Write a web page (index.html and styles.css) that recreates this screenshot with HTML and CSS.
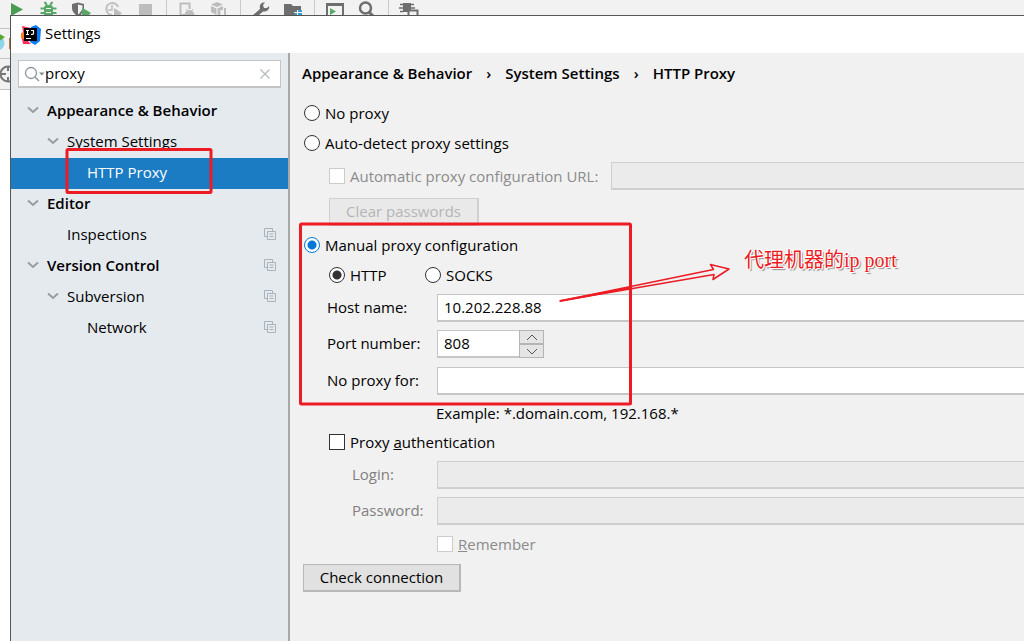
FILE: index.html
```html
<!DOCTYPE html>
<html lang="en">
<head>
<meta charset="utf-8">
<title>Settings</title>
<link rel="stylesheet" href="styles.css">
</head>
<body>
<div class="screen">
  <header class="toolbar">
    <svg class="tool" viewBox="0 0 20 15"><path d="M4 3L16 9.500L4 16z" fill="#499c54"/></svg>
    <svg class="tool" viewBox="0 0 20 15"><g fill="#59a869"><rect x="5" y="5" width="9" height="12" rx="3"/><path d="M1.500 7.500h16v2h-16zM1.500 12h16v2h-16z"/></g><path d="M5.500 2l2.500 3M13.500 2L11 5" stroke="#59a869" stroke-width="2"/><path d="M7 8.500h5M7 12.500h5" stroke="#f2f2f2"/></svg>
    <svg class="tool" viewBox="0 0 20 15"><path d="M1 4l6-1.500L13 4v4l-3 7H5C2 13 1 10 1 8z" fill="#6e6e6e"/><path d="M7 4.500L11.500 5.500V9L8 14H7z" fill="#f2f2f2"/><path d="M11 7.500L20 13l-3 3h-6z" fill="#59a869"/></svg>
    <svg class="tool" viewBox="0 0 20 15"><path d="M9 15A6 6 0 1 1 15 7" fill="none" stroke="#bdbdbd" stroke-width="2"/><path d="M9 5v5H5" fill="none" stroke="#bdbdbd" stroke-width="1.500"/><path d="M11 8l8 5-3 3h-5z" fill="#bdbdbd"/></svg>
    <svg class="tool" viewBox="0 0 20 15"><path d="M4 4h13v11H4z" fill="#bdbdbd"/></svg>
    <span class="tool-sep"></span>
    <svg class="tool" viewBox="0 0 20 15"><path d="M9 15H3.500V3.500h9V9" fill="none" stroke="#bdbdbd" stroke-width="2"/><path d="M8 15a4.500 4.500 0 0 1 9 0zM9 9l2 3M16 9l-2 3" fill="#bdbdbd" stroke="#bdbdbd"/></svg>
    <svg class="tool" viewBox="0 0 20 15"><path d="M8 2l6 2.500-6 2.500-6-2.500zM2 6l5.500 2.500V15L2 12zM14 6L8.500 8.500V15h3V10h2.500z" fill="#bdbdbd"/><path d="M16 8v7" stroke="#bdbdbd" stroke-width="2"/></svg>
    <span class="tool-sep"></span>
    <svg class="tool" viewBox="0 0 20 15"><path d="M2 15L9 9C8 5 10 2 14 2.500L12 5l1 3 3 0 2-2c1 4-3 6-6 5.500L8 15z" fill="#6e6e6e"/></svg>
    <svg class="tool" viewBox="0 0 20 15"><path d="M1 4h7l2 2h8v4h-4v5H1z" fill="#6e6e6e"/><path d="M14 10h5v5h-7v-3h2z" fill="#389fd6"/><path d="M14.500 10v5M11 12.500h8" stroke="#f2f2f2"/></svg>
    <span class="tool-sep"></span>
    <svg class="tool" viewBox="0 0 20 15"><path d="M2 16V4h16v12" fill="none" stroke="#6e6e6e" stroke-width="2"/><path d="M1 3h18v3H1z" fill="#6e6e6e"/><path d="M5 8l6 3.500L5 15z" fill="#59a869"/></svg>
    <svg class="tool" viewBox="0 0 20 15"><circle cx="8.500" cy="8" r="5.500" fill="none" stroke="#6e6e6e" stroke-width="2.500"/><path d="M12 12l4 4" stroke="#6e6e6e" stroke-width="3"/></svg>
    <span class="tool-sep"></span>
    <svg class="tool" viewBox="0 0 20 15"><path d="M4 3h8v9H4z" fill="#6e6e6e"/><path d="M1 4.500h3M-1 8h5M12 4.500h3M12 8h4M1 11.500h3" stroke="#6e6e6e" stroke-width="1.500"/><path d="M9.500 10.500h9V16h-9z" fill="#f2f2f2" stroke="#6e6e6e" stroke-width="2"/></svg>
  </header>

  <div class="workspace">
    <aside class="gutter">
      <svg class="gutter-art" viewBox="0 0 10 75">
        <path d="M0 13.500h10M0 43.500h10M0 74.500h10" stroke="#c4c4c4"/>
        <circle cx="-3" cy="28" r="7.500" fill="#8fd3ec"/>
        <path d="M-2 18l7 4-7 5z" fill="#59a82e"/>
        <path d="M9.500 23v11" stroke="#b47a45"/>
        <circle cx="8" cy="59" r="7.500" fill="none" stroke="#777" stroke-width="2"/>
        <path d="M1 59h5M8 51v5M8 62v5" stroke="#777" stroke-width="2"/>
      </svg>
    </aside>

    <section class="dialog">
      <div class="titlebar">
        <svg class="logo" viewBox="0 0 20 20">
          <path d="M1 1l9 2-5 14-4-2-1-5 2-3z" fill="#fe315d"/>
          <path d="M0 8l6-1 1 9-7-3z" fill="#fc801d"/>
          <path d="M10 2l5-2 5 4-1 12-5 4-5-3z" fill="#087cfa"/>
          <path d="M1 14l5 1 4 4-8 0z" fill="#fe315d"/>
          <path d="M3 3h13v13H3z" fill="#000"/>
          <path d="M5 5.500h3M6.500 5.500v4M5 9.500h3M10 5.500h3M12.500 5.500v3q0 1-2.500 1M5 13.500h5" fill="none" stroke="#fff" stroke-width="1.200"/>
        </svg>
        <span class="title">Settings</span>
      </div>

      <div class="dialog-body">
        <nav class="sidebar">
          <label class="search">
            <svg class="search-icon" viewBox="0 0 21 18"><circle cx="7" cy="8" r="5.500" fill="none" stroke="#8a949c" stroke-width="1.300"/><path d="M11 12l4 4" stroke="#8a949c" stroke-width="1.500"/><path d="M15 7.500h5.500l-2.700 3z" fill="#7f8b91"/></svg>
            <input class="search-input" type="text" value="proxy" aria-label="Search settings">
            <button class="clear" type="button" aria-label="Clear search"><svg viewBox="0 0 10 10"><path d="M.5.500l9 9M9.500.500l-9 9" stroke="#b5babd" stroke-width="1.300"/></svg></button>
          </label>
          <ul class="tree">
            <li class="node level-1"><svg class="chevron" viewBox="0 0 12 8"><path d="M1 1.500l5 4.500 5-4.500" /></svg><span class="node-text">Appearance &amp; Behavior</span></li>
            <li class="node level-2"><svg class="chevron" viewBox="0 0 12 8"><path d="M1 1.500l5 4.500 5-4.500" /></svg><span class="node-text">System Settings</span></li>
            <li class="node level-3 selected"><span class="node-text">HTTP Proxy</span></li>
            <li class="node level-1"><svg class="chevron" viewBox="0 0 12 8"><path d="M1 1.500l5 4.500 5-4.500" /></svg><span class="node-text">Editor</span></li>
            <li class="node level-2 leaf"><span class="node-text">Inspections</span><svg class="scope" viewBox="0 0 12 12"><path d="M3 8.500H.5v-8h8V3M3.500 3.500h8v8h-8zM5.500 6h4M5.500 8.500h4"/></svg></li>
            <li class="node level-1"><svg class="chevron" viewBox="0 0 12 8"><path d="M1 1.500l5 4.500 5-4.500" /></svg><span class="node-text">Version Control</span><svg class="scope" viewBox="0 0 12 12"><path d="M3 8.500H.5v-8h8V3M3.500 3.500h8v8h-8zM5.500 6h4M5.500 8.500h4"/></svg></li>
            <li class="node level-2"><svg class="chevron" viewBox="0 0 12 8"><path d="M1 1.500l5 4.500 5-4.500" /></svg><span class="node-text">Subversion</span><svg class="scope" viewBox="0 0 12 12"><path d="M3 8.500H.5v-8h8V3M3.500 3.500h8v8h-8zM5.500 6h4M5.500 8.500h4"/></svg></li>
            <li class="node level-3"><span class="node-text">Network</span><svg class="scope" viewBox="0 0 12 12"><path d="M3 8.500H.5v-8h8V3M3.500 3.500h8v8h-8zM5.500 6h4M5.500 8.500h4"/></svg></li>
          </ul>
        </nav>

        <main class="content">
          <div class="breadcrumb"><span>Appearance &amp; Behavior</span><span class="crumb-sep">›</span><span>System Settings</span><span class="crumb-sep">›</span><span>HTTP Proxy</span></div>

          <form class="form">
            <div class="row outer"><label class="option"><input type="radio" name="mode">No proxy</label></div>
            <div class="row outer"><label class="option"><input type="radio" name="mode">Auto-detect proxy settings</label></div>
            <div class="row tall indent gap"><label class="option disabled"><input type="checkbox" disabled>Automatic proxy configuration URL:</label><input class="field" type="text" aria-label="Automatic proxy configuration URL" disabled></div>
            <div class="row tall indent"><button class="button wide" type="button" disabled>Clear passwords</button></div>
            <div class="row outer"><label class="option"><input class="accent" type="radio" name="mode" checked>Manual proxy configuration</label></div>
            <div class="row indent protocols"><label class="option"><input type="radio" name="protocol" checked>HTTP</label><label class="option"><input type="radio" name="protocol">SOCKS</label></div>
            <div class="row tall"><label class="name" for="host">Host name:</label><input class="field" id="host" type="text" value="10.202.228.88"></div>
            <div class="row tall"><label class="name" for="port">Port number:</label><div class="spinner"><input class="field" id="port" type="text" value="808"><div class="steps"><button type="button" aria-label="Increase"><svg viewBox="0 0 12 7"><path d="M1 6l5-5 5 5"/></svg></button><button type="button" aria-label="Decrease"><svg viewBox="0 0 12 7"><path d="M1 1l5 5 5-5"/></svg></button></div></div></div>
            <div class="row exceptions"><label class="name" for="except">No proxy for:</label><input class="field" id="except" type="text"></div>
            <div class="row hint">Example: *.domain.com, 192.168.*</div>
            <div class="row indent"><label class="option"><input type="checkbox"><span>Proxy <u>a</u>uthentication</span></label></div>
            <div class="row tall"><label class="name nested" for="login">Login:</label><input class="field" id="login" type="text" disabled></div>
            <div class="row tall"><label class="name nested" for="password">Password:</label><input class="field" id="password" type="password" disabled></div>
            <div class="row remember"><label class="option disabled"><input type="checkbox" disabled><span><u>R</u>emember</span></label></div>
            <div class="row tall"><button class="button check" type="button">Check connection</button></div>
          </form>
        </main>
      </div>
    </section>
  </div>

  <svg class="marks" width="1024" height="641" viewBox="0 0 1024 641">
    <g fill="none" stroke="#ed1c24">
      <rect x="67" y="149.500" width="144" height="43" stroke-width="3" rx="1"/>
      <rect x="300.500" y="224" width="330" height="180" stroke-width="3" rx="1"/>
      <path d="M560 301L713.500 269.500 710.500 264.500 729 269 713 279.500 714 274.500z" stroke-width="1.500" stroke-linejoin="round"/>
      <path d="M560 301L632 287.500" stroke-width="2"/>
    </g>
  </svg>
  <div class="note">代理机器的ip port</div>
</div>
</body>
</html>
```
FILE: styles.css
```css
* { box-sizing: border-box; }

body {
  margin: 0;
  font: 15px/20px "Open Sans", "Noto Sans", sans-serif;
  color: #000;
}

input, button { font: inherit; color: inherit; margin: 0; }

.screen {
  position: relative;
  display: flex;
  flex-direction: column;
  height: 100vh;
  overflow: hidden;
  background: #f2f2f2;
}

/* Main window behind the dialog */
.toolbar { display: flex; flex: none; padding-left: 1px; }
.tool { width: 20px; height: 15px; margin: 0 6px; }
.tool-sep { width: 1px; margin: 0 4px 0 5px; background: #c9c9c9; }
.workspace { display: flex; flex: 1; min-height: 0; }
.gutter { flex: none; width: 10px; background: #fff; }
.gutter-art { display: block; width: 10px; height: 75px; background: #f2f2f2; }

/* Dialog */
.dialog {
  flex: 1;
  min-width: 0;
  display: flex;
  flex-direction: column;
  border: solid #555;
  border-width: 1px 0 0 1px;
  background: #f1f1f1;
}
.titlebar {
  display: flex;
  flex: none;
  align-items: center;
  gap: 4px;
  height: 37px;
  padding-left: 10px;
  background: #fff;
}
.title { padding-bottom: 4px; }
.logo { width: 20px; height: 20px; }
.dialog-body { display: flex; flex: 1; min-height: 0; }

/* Sidebar */
.sidebar {
  flex: none;
  width: 279px;
  border-right: 2px solid #a8a8a8;
  background: #e5eaef;
}
.search {
  display: flex;
  align-items: center;
  height: 28px;
  margin: 7px 7px 8px;
  padding: 0 10px 0 5px;
  border: 2px solid #c4c4c4;
  border-width: 1px 1px 2px;
  background: #fff;
}
.search-icon { flex: none; width: 21px; height: 18px; }
.search-input { flex: 1; min-width: 0; padding: 0 0 2px; border: 0; outline: 0; background: none; }
.clear { display: flex; padding: 0; border: 0; background: none; }
.clear svg { width: 10px; height: 10px; }

.tree { margin: 0; padding: 0; list-style: none; }
.node { display: flex; align-items: center; height: 31px; padding-right: 12px; padding-bottom: 3px; }
.node-text { flex: 1; }
.level-1 { padding-left: 16px; font-weight: 600; }
.level-2 { padding-left: 36px; }
.level-3 { padding-left: 76px; }
.leaf { padding-left: 56px; }
.selected { background: #1b7cc4; color: #fff; }
.chevron { width: 12px; height: 8px; margin-right: 8px; fill: none; stroke: #999c9f; stroke-width: 2; }
.scope { width: 12px; height: 12px; fill: none; stroke: #a9b3bb; }

/* Content */
.content { flex: 1; min-width: 0; padding-left: 12px; }
.breadcrumb {
  display: flex;
  align-items: center;
  height: 41px;
  margin-bottom: 4px;
  padding-bottom: 2px;
  font-weight: 600;
  white-space: nowrap;
}
.crumb-sep { width: 33px; text-align: center; }

.row { display: flex; align-items: center; height: 30px; white-space: nowrap; }
.outer { padding-left: 2px; }
.tall { height: 36px; }
.indent { padding-left: 27px; }
.gap { gap: 13px; }
.option { display: flex; align-items: center; gap: 5px; padding-bottom: 1px; }
.disabled { color: #8b8b8b; }
.protocols .option { width: 96px; }
.exceptions { height: 38px; }
.hint { height: 27px; padding: 0 0 1px 134px; }
.remember { height: 31px; padding-left: 135px; }
.name { flex: none; width: 135px; padding: 0 0 2px 25px; }
.name.nested { padding-left: 50px; color: #808080; }

input[type="radio"], input[type="checkbox"] {
  appearance: none;
  flex: none;
  width: 16px;
  height: 16px;
  border: 1px solid #333;
  background: #fff;
}
input[type="radio"] { border-radius: 50%; }
input[type="radio"]:checked { background: radial-gradient(circle, #333 4px, #fff 5px); }
input.accent:checked { border-color: #0078d7; background: radial-gradient(circle, #0078d7 4px, #fff 5px); }
input[type="checkbox"]:disabled { border-color: #ccc; }

.field {
  flex: 1;
  min-width: 0;
  height: 28px;
  padding: 0 6px 2px;
  border: 2px solid #c6c6c6;
  border-width: 1px 0 2px 1px;
  border-radius: 0;
  outline: 0;
  background: #fff;
}
.field:disabled { border-color: #cfcfcf; background: #ebebeb; }

.spinner { display: flex; width: 107px; }
.steps { display: flex; flex-direction: column; width: 25px; }
.steps button {
  display: flex;
  flex: 1;
  align-items: center;
  justify-content: center;
  padding: 0;
  border: 1px solid #b5b5b5;
  background: #e5e5e5;
}
.steps svg { width: 12px; height: 7px; fill: none; stroke: #555; stroke-width: 1; }

.button { height: 28px; padding: 0 0 2px; border: 2px solid #b8b8b8; border-width: 1px 2px 2px 1px; background: #e1e1e1; }
.button:disabled { border-color: #d0d0d0; background: #e9e9e9; color: #b5b5b5; }
.wide { width: 150px; }
.check { width: 158px; margin-left: 1px; }

/* Annotations over the window */
.marks { position: absolute; left: 0; top: 0; pointer-events: none; }
.note {
  position: absolute;
  left: 744px;
  top: 248px;
  font: 20px/24px "Liberation Serif", "Noto Sans CJK SC", serif;
  color: #ed1c24;
  white-space: nowrap;
  text-shadow: 1px 0 #fff, -1px 0 #fff, 0 1px #fff, 0 -1px #fff, 1px 1px #fff, -1px -1px #fff, 2px 2px 1px #888;
}
```
